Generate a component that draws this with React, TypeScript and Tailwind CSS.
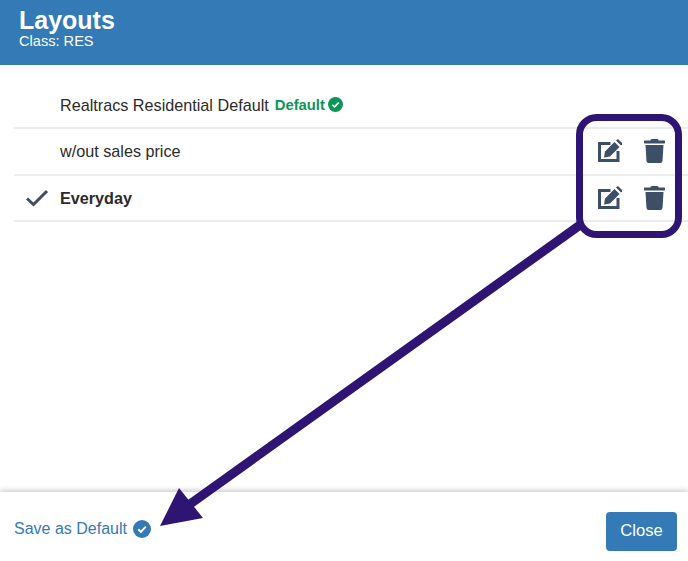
import { FaTrash } from "react-icons/fa"

const CheckBadge = ({ className }: { className: string }) => (
  <svg viewBox="0 0 18 18" className={className}>
    <circle cx="9" cy="9" r="9" fill="currentColor" />
    <path d="M5.2 9.3 L7.9 11.8 L12.8 6.6" fill="none" stroke="#fff" strokeWidth="1.9" />
  </svg>
)

const EditIcon = () => (
  <svg width="24" height="24" viewBox="0 0 24 24">
    <path d="M12.5 4.5 H1.5 V21.5 H20 V12" fill="none" stroke="currentColor" strokeWidth="3" />
    <path d="M6 18.5 L7 12.5 L16.5 3 L21.5 8 L12 17.5 Z" fill="currentColor" />
    <path d="M18 1.5 L20 0 L24.5 4.5 L23 6.5 Z" fill="currentColor" />
  </svg>
)

const Row = ({ name, bold, checked, actions, isDefault }: { name: string; bold?: boolean; checked?: boolean; actions?: boolean; isDefault?: boolean }) => (
  <div className="flex h-[46.5px] items-center border-b-2 border-[#ececec]">
    <div className="flex w-[46px] shrink-0 justify-center">
      {checked && (
        <svg width="24" height="18" viewBox="0 0 24 18" className="ml-[-1px] text-[#3d4f66]">
          <path d="M2 9.5 L8.5 15.5 L22 2" fill="none" stroke="currentColor" strokeWidth="3" />
        </svg>
      )}
    </div>
    <span className={`text-[16.2px] text-[#2b2b2b] ${bold ? "font-bold" : ""}`}>{name}</span>
    {isDefault && (
      <span className="ml-[6px] flex items-center gap-[3px] text-[14.8px] font-bold text-[#0f9457]">
        Default
        <CheckBadge className="h-[15px] w-[15px]" />
      </span>
    )}
    {actions && (
      <div className="ml-auto flex items-center gap-[22px] pr-[23px] text-[#3d4f66]">
        <EditIcon />
        <FaTrash className="h-[24px] w-[21px]" />
      </div>
    )}
  </div>
)

export default function App() {
  return (
    <div className="relative flex h-[561px] w-[688px] flex-col overflow-hidden bg-white font-['Liberation_Sans',sans-serif]">
      <header className="flex h-[65px] shrink-0 flex-col bg-[#337ab7] pl-[19px] pt-[7px] text-white">
        <h1 className="text-[25px] font-bold leading-[27px]">Layouts</h1>
        <p className="text-[14.6px] leading-[15px]">Class: RES</p>
      </header>

      <main className="flex-1 pl-[14px] pt-[17.5px]">
        <Row name="Realtracs Residential Default" isDefault />
        <Row name="w/out sales price" actions />
        <Row name="Everyday" bold checked actions />
      </main>

      <footer className="flex h-[69px] shrink-0 items-center justify-between pl-[14px] pr-[11px] pt-[10px] shadow-[0_-2px_5px_rgba(0,0,0,0.2)]">
        <a className="mt-[-6px] flex items-center gap-[6px] text-[16px] text-[#337ab7]">
          Save as Default
          <CheckBadge className="h-[18px] w-[18px]" />
        </a>
        <button className="h-[39px] w-[71px] rounded-[4px] bg-[#337ab7] text-[16.6px] text-white">Close</button>
      </footer>

      {/* annotation drawn over the page */}
      <svg className="absolute left-0 top-0" width="688" height="561" viewBox="0 0 688 561">
        <rect x="579.5" y="117.5" width="99" height="117" rx="17" fill="none" stroke="#2e1574" strokeWidth="7" />
        <path d="M580 225 L186 507" stroke="#2e1574" strokeWidth="9" fill="none" />
        <path d="M160 526 L179 488 L203 518 Z" fill="#2e1574" />
      </svg>
    </div>
  )
}
